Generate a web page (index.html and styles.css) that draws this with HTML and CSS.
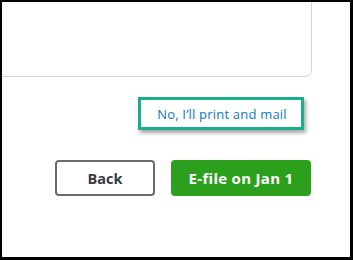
FILE: index.html
```html
<!DOCTYPE html>
<html>
<head>
<meta charset="utf-8">
<link rel="stylesheet" href="styles.css">
</head>
<body>
<div class="frame">
  <div class="card"></div>
  <div class="link-row">
    <div class="highlight"><a class="link" href="#">No, I’ll print and mail</a></div>
  </div>
  <div class="actions">
    <button class="btn btn-back">Back</button>
    <button class="btn btn-primary">E-file on Jan 1</button>
  </div>
</div>
</body>
</html>
```

FILE: styles.css
```css
html, body {
  margin: 0;
  padding: 0;
  background: #fff;
}
.frame {
  box-sizing: border-box;
  width: 353px;
  height: 260px;
  border: 2px solid #000;
  border-right-width: 3px;
  border-bottom-width: 3px;
  overflow: hidden;
  font-family: "Open Sans", "Liberation Sans", sans-serif;
}
.card {
  box-sizing: border-box;
  margin-top: -30px;
  margin-left: -20px;
  width: 330px;
  height: 105px;
  border: 1.5px solid #d4d4d8;
  border-radius: 7px;
}
.link-row {
  display: flex;
  justify-content: flex-end;
  margin-top: 20px;
  padding-right: 46px;
}
.highlight {
  box-sizing: border-box;
  width: 166px;
  height: 33px;
  border: 3px solid #1aae8a;
  box-shadow: 2px 3px 4px rgba(0,0,0,0.35);
  display: flex;
  align-items: center;
  justify-content: center;
}
.link {
  color: #0d77c6;
  text-decoration: none;
  font-size: 13px;
  letter-spacing: 0.2px;
  padding-left: 2px;
}
.actions {
  display: flex;
  justify-content: flex-end;
  gap: 16px;
  margin-top: 30px;
  padding-right: 39px;
}
.btn {
  box-sizing: border-box;
  height: 36px;
  border-radius: 4px;
  font-family: "Open Sans", "Liberation Sans", sans-serif;
  font-weight: 700;
  font-size: 15px;
  padding: 0;
}
.btn-back {
  width: 100px;
  background: #fff;
  border: 2px solid #6b6c72;
  color: #393a3d;
  font-size: 14.5px;
}
.btn-primary {
  width: 140px;
  background: #2ca01c;
  border: none;
  color: #fff;
  letter-spacing: 0.3px;
}
```
